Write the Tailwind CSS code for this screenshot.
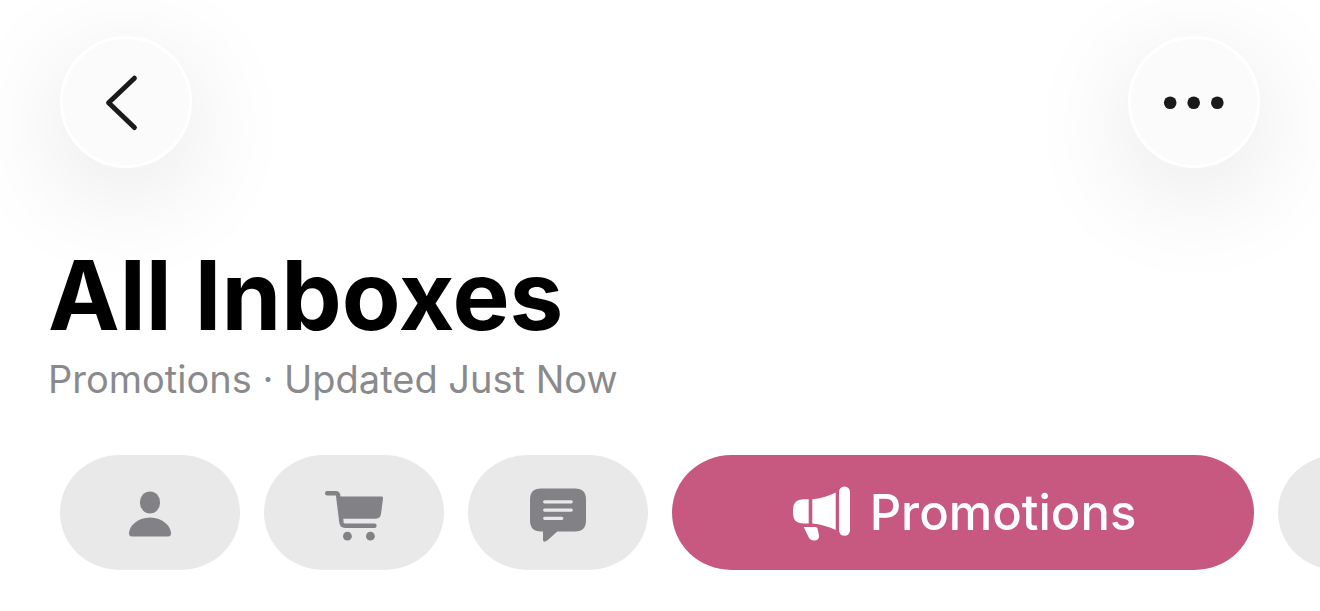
<!DOCTYPE html>
<html lang="en">
<head>
  <meta charset="UTF-8" />
  <meta name="viewport" content="width=device-width, initial-scale=1.0" />
  <title>All Inboxes</title>
  <script src="https://cdn.jsdelivr.net/npm/@tailwindcss/browser@4"></script>
</head>
<body class="bg-white text-black font-['Inter','Liberation_Sans',sans-serif] overflow-x-hidden">
  <header class="flex justify-between items-center px-15 pt-9">
    <button aria-label="Back" class="flex items-center justify-center size-33 rounded-full border-3 border-white bg-[#fbfbfb] text-[#1a1a1a] shadow-[0_24px_112px_rgba(0,0,0,0.11)]">
      <svg class="size-15" viewBox="0 0 60 60" fill="none" stroke="currentColor" stroke-width="5" stroke-linecap="round" stroke-linejoin="round">
        <path d="M38.4 6.2 12.6 30.8 38.4 55.5" />
      </svg>
    </button>
    <button aria-label="More" class="flex items-center justify-center size-33 rounded-full border-3 border-white bg-[#fbfbfb] text-[#1a1a1a] shadow-[0_24px_112px_rgba(0,0,0,0.11)]">
      <svg class="size-16" viewBox="0 0 64 64" fill="currentColor">
        <circle cx="8.2" cy="32.7" r="6.3" />
        <circle cx="31.7" cy="32.7" r="6.3" />
        <circle cx="55.3" cy="32.7" r="6.3" />
      </svg>
    </button>
  </header>

  <main>
    <div class="px-12 pt-[79px]">
      <h1 class="text-[96px] leading-[96px] font-bold">All Inboxes</h1>
      <p class="mt-3 text-[38px] leading-12 text-[#8a8a8d]">Promotions · Updated Just Now</p>
    </div>

    <!-- Categories -->
    <nav class="flex gap-6 pl-15 pt-13 overflow-hidden">
      <button aria-label="Primary" class="flex shrink-0 items-center justify-center w-45 h-[115px] rounded-[60px/58px] bg-[#e9e9e9] text-[#828186]">
        <svg class="size-16" viewBox="0 0 64 64" fill="currentColor">
          <ellipse cx="32" cy="21.4" rx="10.1" ry="11" />
          <path d="M14 55.5c-2 0-3-1.2-3-3C11 45.5 19 36.5 32 36.5s21 9 21 16c0 1.8-1 3-3 3Z" />
        </svg>
      </button>
      <button aria-label="Transactions" class="flex shrink-0 items-center justify-center w-45 h-[115px] rounded-[60px/58px] bg-[#e9e9e9] text-[#828186]">
        <svg class="size-16" viewBox="0 0 64 64" fill="currentColor">
          <path d="M5.2 12.2h8.600q2 0 2.300 2L19.500 41.500q.5 3.300 3.500 3.300h29.500" fill="none" stroke="currentColor" stroke-width="4.4" stroke-linecap="round" stroke-linejoin="round" />
          <path d="M16.500 15.600H59.500q1.700 0 1.500 1.800L59.100 32.500q-.7 5.200-5.300 5.200H19Z" />
          <circle cx="25.4" cy="55.2" r="4.4" />
          <circle cx="48.4" cy="55.2" r="4.4" />
        </svg>
      </button>
      <button aria-label="Updates" class="flex shrink-0 items-center justify-center w-45 h-[115px] rounded-[60px/58px] bg-[#e9e9e9] text-[#828186]">
        <svg class="size-16" viewBox="0 0 64 64" fill="currentColor">
          <path d="M15 7.500H49Q60 7.500 60 18.500V39.500Q60 50.500 49 50.500H31.300L21.500 59.300Q17 62.500 17 58.500V50.500H15Q4 50.500 4 39.500V18.500Q4 7.500 15 7.500Z" />
          <path d="M18.700 20.800H45.200M18.700 29.100H45.200M18.700 37.300H35.800" stroke="#e9e9e9" stroke-width="3.3" stroke-linecap="round" />
        </svg>
      </button>
      <button class="flex shrink-0 items-center justify-center gap-4 w-[582px] h-[115px] rounded-[60px/58px] bg-[#c75880] text-white">
        <svg class="size-16" viewBox="0 0 64 64" fill="currentColor">
          <path d="M18.700 18.200V42.500H13Q3 42.500 3 32V28.700Q3 18.200 13 18.200Z" />
          <path d="M22.300 18.200Q34.500 17 45.700 11.400V48.900Q34.500 43.600 22.300 42.500Z" />
          <rect x="49" y="5.5" width="11" height="49.3" rx="5.5" />
          <path d="M13.700 46H25.500Q27.200 46 27.500 47.500L29 54.500Q29.300 59.500 24 59.500 20.500 59.500 18.800 56.500Z" />
        </svg>
        <span class="text-[49px] leading-15 font-medium">Promotions</span>
      </button>
      <button aria-label="All Mail" class="shrink-0 w-45 h-[115px] rounded-[60px/58px] bg-[#e9e9e9]"></button>
    </nav>
  </main>
</body>
</html>
